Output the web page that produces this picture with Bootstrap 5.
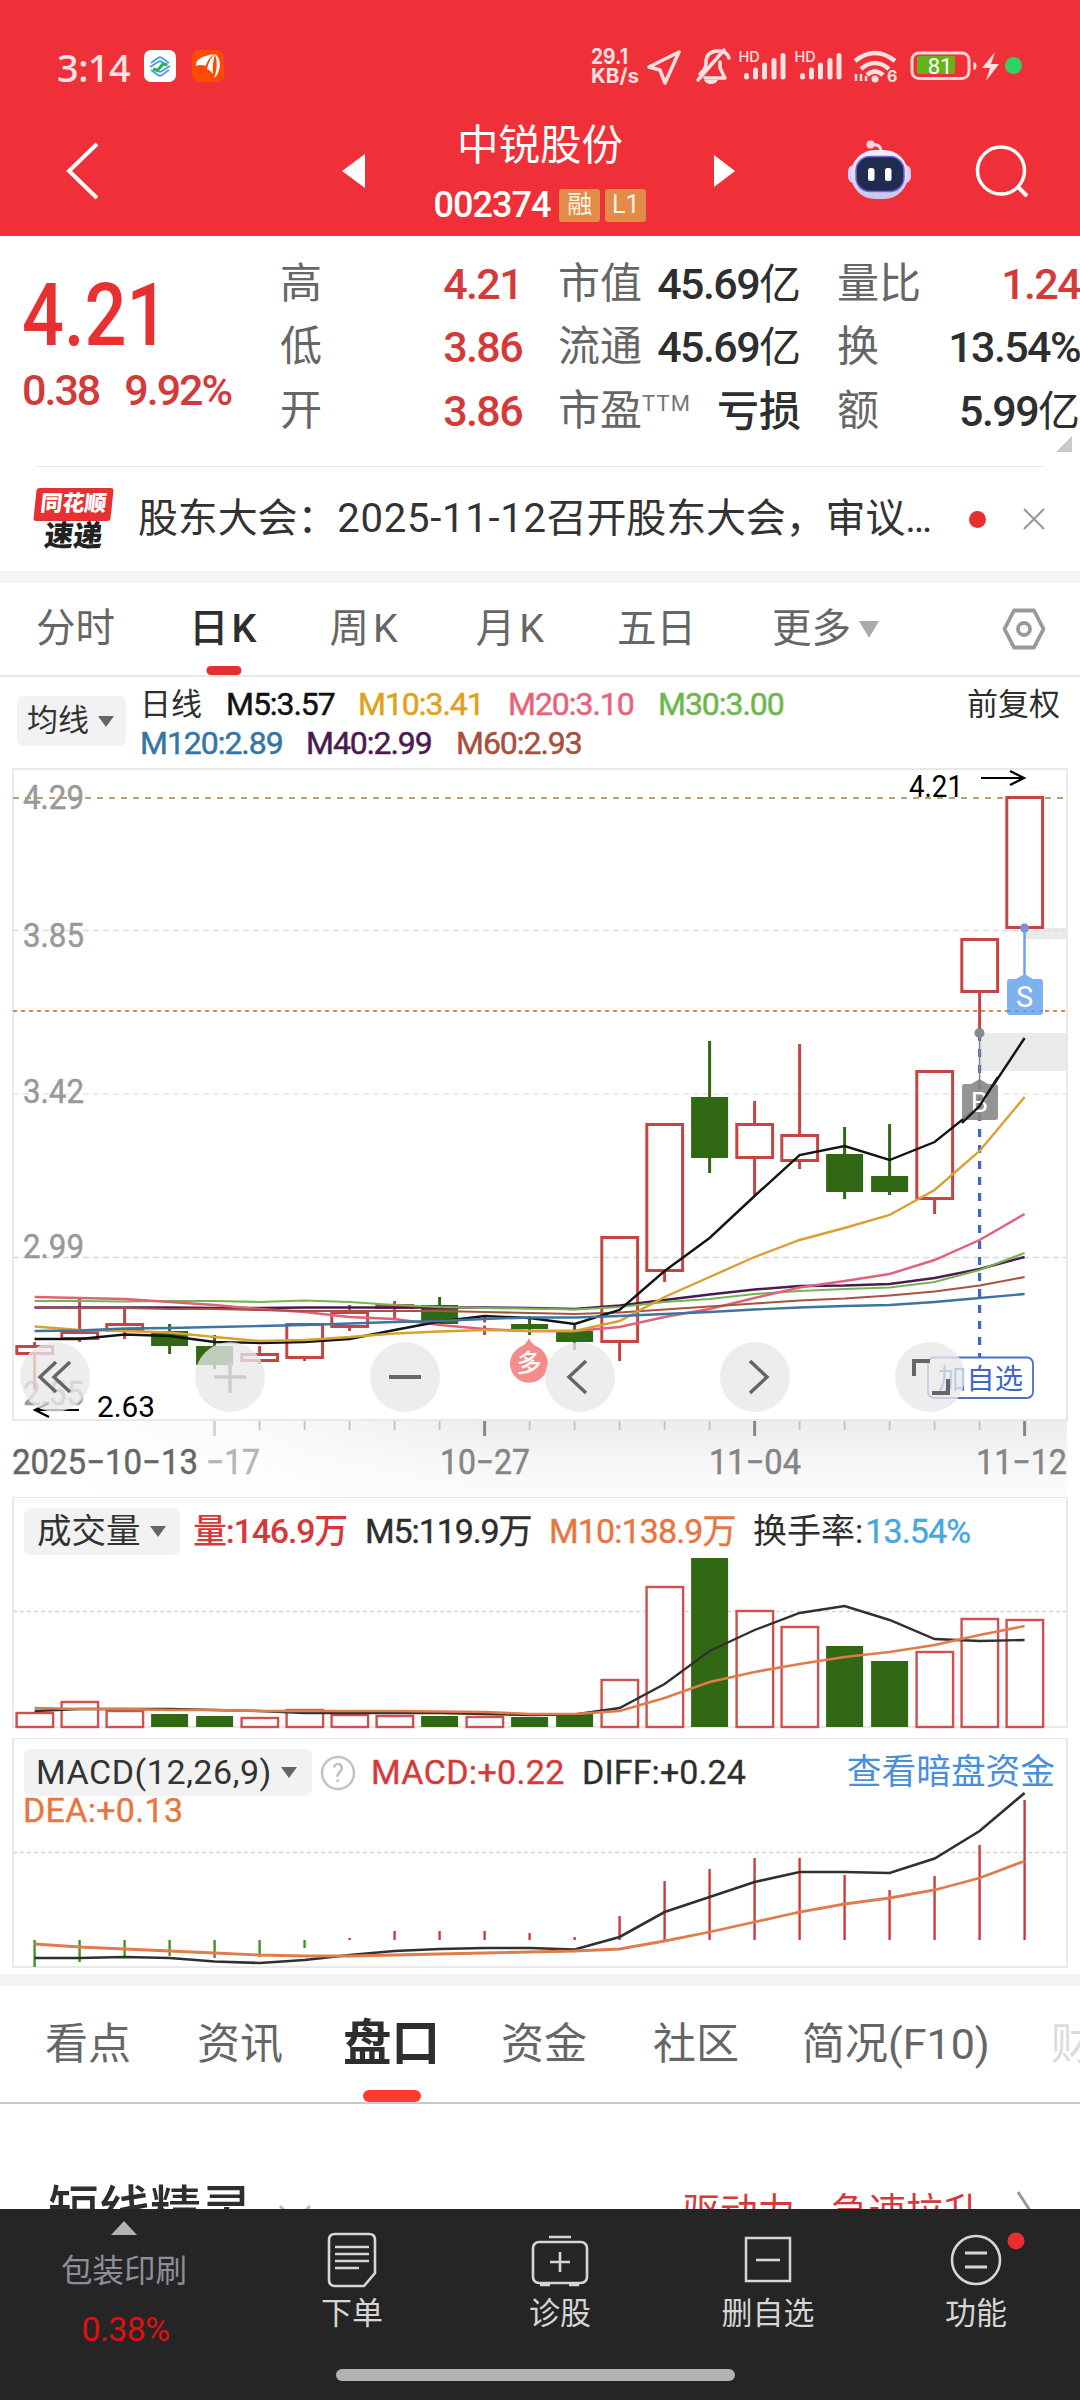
<!DOCTYPE html>
<html lang="zh-CN">
<head>
<meta charset="utf-8">
<meta name="viewport" content="width=1080">
<title>中锐股份 002374</title>
<link href="https://cdn.jsdelivr.net/npm/bootstrap@5.3.0/dist/css/bootstrap.min.css" rel="stylesheet">
<style>
body{width:1080px;height:2400px;overflow:hidden;background:#fff;color:#2e2e2e;font-family:Roboto,"Noto Sans CJK SC",sans-serif;font-size:40px;line-height:1.2}
svg{display:block;flex:none}
svg text{font-family:Roboto,"Noto Sans CJK SC",sans-serif}
svg .net text{font-family:Inter,sans-serif}
.top-red{background:#f03038;height:236px;color:#fff}
.status-row{height:106px;padding:40px 50px 0 57px}
.clock{font-size:38px;letter-spacing:-.6px;color:#ffe3e3;line-height:54px;width:86px;font-weight:500;font-family:"Noto Sans",sans-serif}
.title-row{height:130px;padding-left:64px}
.stock-title{width:348px;padding-top:15px}
.stock-name{font-size:41.5px;line-height:50px}
.stock-code{font-size:36px;letter-spacing:-1px;font-weight:500;line-height:36px;margin-top:16px}
.tagbox{background:#e38b49;color:#fff3e2;border-radius:3px;height:33px;line-height:32px;font-size:25px;width:41px;text-align:center;letter-spacing:0;font-weight:400}
.quote{height:230px}
.pricebox{width:281px;padding:28px 0 0 22px;color:#e63032}
.price-big{font-size:87px;font-weight:500;line-height:102px}
.price-big span{display:inline-block;transform:scaleX(.85);transform-origin:0 50%}
.price-sub{font-size:43px;letter-spacing:-2px;line-height:50px;color:#d53a3a;font-weight:500;margin-top:-1px}
.qcol{padding-top:15px}
.qrow{height:63.4px;line-height:66px}
.qlabel{color:#666;font-size:42px;white-space:nowrap}
.qval{font-size:43px;font-weight:500;letter-spacing:-1.6px;white-space:nowrap}
.qval i{font-style:normal;font-size:42px;font-weight:400;letter-spacing:0}
.qval i.loss{font-weight:500}
.up{color:#d53a3a}
.ttm{font-size:22px;color:#777;line-height:22px;letter-spacing:1.2px;vertical-align:14px}
.hairline{height:1px;background:#ececec;margin:0 35px}
.news{height:104px;padding:0 35px 0 35px}
.brand{width:78px;margin-right:25px;padding-top:2px}
.brand-a{background:#e63032;color:#fff;font-weight:900;font-size:22px;line-height:31px;height:33px;width:77px;text-align:center;transform:skewX(-6deg);border-radius:3px}
.brand-b{font-weight:900;font-size:29px;line-height:31px;transform:skewX(-6deg);text-align:center;width:77px;color:#222}
.newstext{font-size:40px;letter-spacing:-.15px;width:831px;white-space:nowrap;line-height:60px;color:#333}
.newstext span{letter-spacing:.75px}
.reddot{width:17px;height:17px;border-radius:50%;background:#e62e2e}
.band{height:12px;background:#f4f4f4}
.ktabs{height:94px;border-bottom:2px solid #e8e8e8;color:#666;font-size:39.5px;line-height:92px}
.ktabs .tabitem{position:relative;white-space:nowrap}
.ktabs .on{color:#2e2e2e;font-weight:500}
.tabitem .bar{position:absolute;left:50%;bottom:0;transform:translateX(-50%);width:35px;height:9px;border-radius:5px;background:#e62e2e}
.legend{height:91px;padding-left:17px}
.pill{background:#f2f2f2;border-radius:7px;color:#333}
.tri{width:0;height:0;border-left:8px solid transparent;border-right:8px solid transparent;border-top:11px solid #666}
.ma{font-size:32px;line-height:39px;letter-spacing:-1.05px;white-space:nowrap;font-weight:400;-webkit-text-stroke:.5px currentColor}
.ma span{display:inline-block}
.panel{position:relative}
.over{position:absolute;left:0;right:0}
.ind{font-size:34px;white-space:nowrap}
.ctl{width:70px;height:70px;border-radius:50%;background:rgba(232,232,232,.78)}
.ptabs{height:118px;border-bottom:2px solid #c9c9c9;font-size:43px;color:#666;line-height:116px}
.ptabs .tabitem{white-space:nowrap}
.ptabs .on{color:#2e2e2e;font-size:48.5px;font-weight:700}
.ptabs .bar{width:58px;height:12px;border-radius:6px;background:#fb3b30}
.peek{height:105px;overflow:hidden;padding:72px 46px 0 48px}
.dock{height:191px;background:#252525;color:#d6d6d6;position:relative}
.dockitem{width:208px;font-size:31px;line-height:38px}
</style>
</head>
<body>
<header class="top-red">
  <div class="status-row d-flex align-items-start">
    <div class="clock">3:14</div>
    <svg width="82" height="34" viewBox="0 0 82 34" style="margin-top:10px"><rect x="1" width="32" height="32" rx="7" fill="#fff"/><g fill="none" stroke="#4f9fdd" stroke-width="1.900" stroke-linejoin="round"><path d="M8 13l7-5q2-1.500 4 0l7 5"/><path d="M7 17l8-5q2-1.500 4 0l3 2"/><path d="M8 20l7 5q2 1.500 4 0l7-5"/><path d="M27 16l-8 5q-2 1.500-4 0l-3-2"/></g><path d="M10 19l4.500 1.500L20 14l4.500 1" fill="none" stroke="#26b35c" stroke-width="3"/><rect x="49" width="32" height="32" rx="7" fill="#ff4a05"/><path d="M54 11q4-5 17-7q-6 5-8.500 12q-5-2-9.500 0q0-3 1-5zM64 19q2-10 8-15q-3 10-2 20q-3-4-6-5zM71 28q5-12 1-24q8 6 3 19q-1 3-4 5z" fill="#fff"/></svg>
    <svg class="ms-auto" width="443" height="55" viewBox="587 40 443 55">
      <g class="net" fill="#ffe0e0" font-weight="700"><text x="591" y="64" font-size="21" textLength="37" lengthAdjust="spacingAndGlyphs">29.1</text><text x="591" y="82.500" font-size="20" textLength="48" lengthAdjust="spacingAndGlyphs">KB/s</text><text x="738.500" y="62" font-size="14.500" font-weight="500">HD</text><text x="794.500" y="62" font-size="14.500" font-weight="500">HD</text><text x="887" y="82" font-size="16">6</text></g>
      <g fill="none" stroke="#ffe0e0" stroke-width="3.500" stroke-linejoin="round" stroke-linecap="round"><path d="M649 67l30-15-14 31-5-13z"/><path d="M700 74q6-5 6-11 0-12 12-12 9 0 11 7M705 78h20l-5-10v-6M698 80l26-30"/></g>
      <path d="M704 80h14q-2 4-7 4t-7-4z" fill="#ffe0e0"/>
      <g stroke="#ffe0e0" stroke-width="5" stroke-linecap="round"><path d="M746.500 75.500v1.500M755.500 70v7M764.500 65v12M774 60.500v16.500M783 55.500v21.500M802.500 75.500v1.500M811.500 70v7M820.500 65v12M830 60.500v16.500M839 55.500v21.500"/></g>
      <g fill="none" stroke="#ffe0e0" stroke-width="4.500"><path d="M855 61q20-16 40 0M861 69q14-12 28 0M867 75q8-7 16 0"/><path d="M856 74v7M861 81v-7M866 76v5" stroke-width="2.500"/></g><circle cx="875" cy="79" r="3.500" fill="#ffe0e0"/>
      <rect x="912" y="53" width="57" height="25.500" rx="7" fill="none" stroke="#ffd5d5" stroke-width="3"/><rect x="917" y="56" width="38" height="18" rx="2" fill="#64b21c"/><path d="M973.500 62q3 0 3 4t-3 4z" fill="#ffd5d5"/><text x="940" y="74" font-size="22" fill="#fff" text-anchor="middle">81</text>
      <path d="M995 52l-13 16h8l-4 13 13-17h-8z" fill="#ffe0e0"/><circle cx="1013.500" cy="65.500" r="8.500" fill="#2fd265"/>
    </svg>
  </div>
  <div class="title-row d-flex align-items-center">
    <svg width="36" height="60" viewBox="64 141 36 60"><path d="M97 144L69 171l28 27" fill="none" stroke="#fff" stroke-width="4"/></svg>
    <svg width="24" height="36" viewBox="0 0 24 36" style="margin-left:242px"><path d="M0 18L23 1v34z" fill="#fff"/></svg>
    <div class="stock-title h-100 text-center">
      <div class="stock-name">中锐股份</div>
      <div class="stock-code d-flex justify-content-center align-items-center"><span>002374</span><span class="tagbox" style="margin-left:9px">融</span><span class="tagbox" style="margin-left:5px">L1</span></div>
    </div>
    <svg width="22" height="34" viewBox="0 0 22 34"><path d="M21 17L0 1v32z" fill="#fff"/></svg>
    <svg width="68" height="64" viewBox="846 140 68 64" style="margin-left:110px"><defs><linearGradient id="g1" x1="0" y1="0" x2="0" y2="1"><stop offset="0" stop-color="#fdf0fb"/><stop offset="1" stop-color="#c7c5f2"/></linearGradient></defs><path d="M871 146q10-2 10 7" fill="none" stroke="#ffd7e2" stroke-width="3"/><circle cx="870.500" cy="145.500" r="4" fill="#ffd7e2"/><rect x="848" y="166" width="63" height="18" rx="6" fill="#d3cbf1"/><rect x="851" y="151" width="57" height="49" rx="24" fill="url(#g1)"/><rect x="856" y="157.500" width="48" height="35" rx="14" fill="#202b50" stroke="#7166d8" stroke-width="1.500"/><rect x="868" y="169" width="6.500" height="13" rx="2.500" fill="#fff"/><rect x="885" y="169" width="6.500" height="13" rx="2.500" fill="#fff"/></svg>
    <svg width="58" height="60" viewBox="974 142 58 60" style="margin-left:60px"><circle cx="1001" cy="171.500" r="23.500" fill="none" stroke="#fff" stroke-width="3.500"/><path d="M1017 187l10 10" stroke="#fff" stroke-width="4"/></svg>
  </div>
</header>

<section class="quote d-flex">
  <div class="pricebox">
    <div class="price-big"><span>4.21</span></div>
    <div class="price-sub"><span>0.38</span><span style="margin-left:25px">9.92%</span></div>
  </div>
  <div class="qcol" style="width:242px;margin-left:-1px">
    <div class="qrow d-flex justify-content-between"><span class="qlabel">高</span><span class="qval up">4.21</span></div>
    <div class="qrow d-flex justify-content-between"><span class="qlabel">低</span><span class="qval up">3.86</span></div>
    <div class="qrow d-flex justify-content-between"><span class="qlabel">开</span><span class="qval up">3.86</span></div>
  </div>
  <div class="qcol" style="width:243px;margin-left:36px">
    <div class="qrow d-flex justify-content-between"><span class="qlabel">市值</span><span class="qval">45.69<i>亿</i></span></div>
    <div class="qrow d-flex justify-content-between"><span class="qlabel">流通</span><span class="qval">45.69<i>亿</i></span></div>
    <div class="qrow d-flex justify-content-between"><span class="qlabel">市盈<span class="ttm">TTM</span></span><span class="qval"><i class="loss">亏损</i></span></div>
  </div>
  <div class="qcol" style="width:243px;margin-left:36px">
    <div class="qrow d-flex justify-content-between"><span class="qlabel">量比</span><span class="qval up">1.24</span></div>
    <div class="qrow d-flex justify-content-between"><span class="qlabel">换</span><span class="qval">13.54%</span></div>
    <div class="qrow d-flex justify-content-between"><span class="qlabel">额</span><span class="qval">5.99<i>亿</i></span></div>
    <svg class="ms-auto me-2" width="16" height="16" viewBox="0 0 16 16" style="margin-top:-5px"><path d="M16 0v16H0z" fill="#c9c9c9"/></svg>
  </div>
</section>
<div class="hairline"></div>
<section class="news d-flex align-items-center">
  <div class="brand"><div class="brand-a">同花顺</div><div class="brand-b">速递</div></div>
  <div class="newstext">股东大会：<span>2025‑11‑12</span>召开股东大会，审议<span style="letter-spacing:0">…</span></div>
  <div class="reddot"></div>
  <svg class="ms-auto" width="22" height="22" viewBox="0 0 22 22"><path d="M1 1l20 20M21 1L1 21" stroke="#999" stroke-width="2.200"/></svg>
</section>
<div class="band"></div>

<nav class="ktabs d-flex">
  <div class="tabitem" style="margin-left:36px">分时</div>
  <div class="tabitem on" style="margin-left:74px;letter-spacing:3px">日K<span class="bar"></span></div>
  <div class="tabitem" style="margin-left:70px;letter-spacing:4px">周K</div>
  <div class="tabitem" style="margin-left:74px;letter-spacing:4px">月K</div>
  <div class="tabitem" style="margin-left:69px">五日</div>
  <div class="tabitem d-flex align-items-center" style="margin-left:76px">更多<svg width="20" height="17" viewBox="0 0 20 17" style="margin-left:8px"><path d="M0 0h20L10 17z" fill="#aaa"/></svg></div>
  <svg class="ms-auto align-self-center" width="44" height="42" viewBox="0 0 44 42" style="margin-right:34px"><path d="M12 2.500h20L41.500 21 32 39.500H12L2.500 21z" fill="none" stroke="#999" stroke-width="3.800" stroke-linejoin="round"/><circle cx="22" cy="21" r="6" fill="none" stroke="#999" stroke-width="3.800"/></svg>
</nav>

<section class="legend d-flex">
  <div class="pill d-flex align-items-center" style="width:109px;height:50px;margin-top:19px;padding-left:10px;font-size:31px">均线<span class="tri" style="margin-left:9px"></span></div>
  <div style="margin:8px 0 0 14px">
    <div class="ma d-flex"><span style="width:86px;font-size:31px;letter-spacing:0;-webkit-text-stroke:0">日线</span><span style="width:132px;color:#111">M5:3.57</span><span style="width:150px;color:#e0a020">M10:3.41</span><span style="width:150px;color:#e8637a">M20:3.10</span><span style="color:#6db84e">M30:3.00</span></div>
    <div class="ma d-flex"><span style="width:166px;color:#3576a5">M120:2.89</span><span style="width:150px;color:#4c1a52">M40:2.99</span><span style="color:#a85040">M60:2.93</span></div>
  </div>
  <div class="ms-auto" style="font-size:31px;line-height:40px;margin:8px 20px 0 0">前复权</div>
</section>

<section class="panel" style="height:729px">
  <svg id="kline" width="1080" height="729" viewBox="0 768 1080 729"></svg>
  <div class="over d-flex" style="top:574px;padding-left:20px;gap:105px">
    <div class="ctl"><svg width="70" height="70"><path d="M36 20L20 35l16 15M50 20L34 35l16 15" fill="none" stroke="#666" stroke-width="3.500"/></svg></div>
    <div class="ctl"><svg width="70" height="70"><path d="M19 35h32M35 19v32" stroke="#ccc" stroke-width="3.500"/></svg></div>
    <div class="ctl"><svg width="70" height="70"><path d="M19 35h32" stroke="#666" stroke-width="4"/></svg></div>
    <div class="ctl"><svg width="70" height="70"><path d="M41 19L24 35l17 16" fill="none" stroke="#666" stroke-width="3.500"/></svg></div>
    <div class="ctl"><svg width="70" height="70"><path d="M30 19l17 16-17 16" fill="none" stroke="#666" stroke-width="3.500"/></svg></div>
    <div class="ctl"><svg width="70" height="70"><path d="M19 34V19h16M53 37v14H37" fill="none" stroke="#666" stroke-width="4"/></svg></div>
  </div>
</section>

<section class="panel" style="height:241px">
  <svg id="vol" width="1080" height="241" viewBox="0 1497 1080 241"></svg>
  <div class="over d-flex align-items-center ind" style="top:11px;left:24px;height:47px;letter-spacing:-.9px">
    <div class="pill d-flex align-items-center h-100" style="width:156px;padding-left:13px;font-size:34.500px;letter-spacing:0;margin-right:13px">成交量<span class="tri" style="margin-left:9px"></span></div>
    <span class="up" style="width:172px;font-weight:500;letter-spacing:-1.2px">量:146.9万</span><span style="width:184px;letter-spacing:-1.1px;-webkit-text-stroke:.4px">M5:119.9万</span><span style="width:204px;color:#e9763f;-webkit-text-stroke:.4px">M10:138.9万</span><span style="letter-spacing:0">换手率:</span><span style="color:#47a8df;margin-left:2px;-webkit-text-stroke:.4px">13.54%</span>
  </div>
</section>

<section class="panel" style="height:236px">
  <svg id="macd" width="1080" height="236" viewBox="0 1738 1080 236"></svg>
  <div class="over d-flex align-items-center ind" style="top:11px;left:24px;right:25px;height:47px">
    <div class="pill d-flex align-items-center h-100" style="width:288px;padding-left:12px"><span style="width:238px;letter-spacing:.55px">MACD(12,26,9)</span><span class="tri" style="margin-left:7px"></span></div>
    <svg width="36" height="36" viewBox="0 0 36 36" style="margin:0 15px 0 8px"><circle cx="18" cy="18" r="16" fill="none" stroke="#c4c4c4" stroke-width="2.500"/><text x="18" y="27" font-size="25" fill="#bbb" text-anchor="middle">?</text></svg>
    <span class="up" style="width:211px;letter-spacing:.35px;-webkit-text-stroke:.4px">MACD:+0.22</span><span style="letter-spacing:.1px;-webkit-text-stroke:.3px">DIFF:+0.24</span><span class="ms-auto" style="color:#4a8fd9;font-size:34.700px">查看暗盘资金</span>
  </div>
  <div class="over ind" style="top:52px;left:23px;color:#e9763f;letter-spacing:.3px;-webkit-text-stroke:.4px">DEA:+0.13</div>
</section>
<div class="band"></div>

<nav class="ptabs d-flex overflow-hidden">
  <div class="tabitem" style="margin-left:45px">看点</div>
  <div class="tabitem" style="margin-left:66px">资讯</div>
  <div class="tabitem on position-relative" style="margin-left:60px">盘口<span class="bar"></span></div>
  <div class="tabitem" style="margin-left:61px">资金</div>
  <div class="tabitem" style="margin-left:66px">社区</div>
  <div class="tabitem" style="margin-left:63px">简况(F10)</div>
  <div class="tabitem" style="margin-left:61px;color:#dcdcdc">财务</div>
</nav>

<section class="peek d-flex align-items-start">
  <div style="font-size:51px;font-weight:500;line-height:70px">短线精灵</div>
  <svg width="34" height="22" viewBox="0 0 34 22" style="margin:28px 0 0 26px"><path d="M2 2l15 15L32 2" fill="none" stroke="#bbb" stroke-width="3"/></svg>
  <div class="ms-auto up" style="font-size:37.500px;line-height:60px;padding-top:6px">驱动力<span style="margin-left:36px">急速拉升</span></div>
  <svg width="18" height="44" viewBox="0 0 18 44" style="margin:14px 0 0 35px"><path d="M2 2l13 20L2 42" fill="none" stroke="#999" stroke-width="3"/></svg>
</section>

<footer class="dock d-flex">
  <div class="text-center" style="width:248px;padding-top:12px;color:#8e8e98;font-size:31.500px;line-height:38px">
    <svg class="mx-auto" width="26" height="14" viewBox="0 0 26 14"><path d="M13 0l13 14H0z" fill="#b3b3b3"/></svg>
    <div style="margin-top:18px">包装印刷</div>
    <div style="margin-top:19px;padding-left:3px;color:#e01010;font-size:34px;letter-spacing:-.6px">0.38%</div>
  </div>
  <div class="dockitem text-center"><svg class="mx-auto" width="64" height="86" viewBox="320 2209 64 86"><path d="M335 2234h34q6 0 6 6v33l-11 13h-29q-6 0-6-6v-40q0-6 6-6z" fill="none" stroke="#d6d6d6" stroke-width="2.600"/><path d="M335 2247h34M335 2254h34M335 2261h34M335 2268h24" stroke="#d6d6d6" stroke-width="2.600"/></svg>下单</div>
  <div class="dockitem text-center"><svg class="mx-auto" width="64" height="86" viewBox="528 2209 64 86"><rect x="533" y="2242" width="54" height="41" rx="6" fill="none" stroke="#d6d6d6" stroke-width="2.600"/><path d="M549 2237h22M540 2285h10M569 2285h10M550 2262h20M560 2252v20" stroke="#d6d6d6" stroke-width="2.600"/></svg>诊股</div>
  <div class="dockitem text-center"><svg class="mx-auto" width="64" height="86" viewBox="736 2209 64 86"><rect x="746" y="2238" width="44" height="43" fill="none" stroke="#d6d6d6" stroke-width="2.500"/><path d="M756 2260h24" stroke="#d6d6d6" stroke-width="2.600"/></svg>删自选</div>
  <div class="dockitem text-center"><svg class="mx-auto" width="100" height="86" viewBox="926 2209 100 86"><circle cx="976" cy="2260" r="24" fill="none" stroke="#d6d6d6" stroke-width="2.600"/><path d="M965 2253h22M965 2267h22" stroke="#d6d6d6" stroke-width="2.800"/><circle cx="1016" cy="2241" r="8.500" fill="#e62e2e"/></svg>功能</div>
  <div class="over d-flex justify-content-center" style="top:160px;right:9px"><div style="width:399px;height:12px;border-radius:6px;background:#b2b2b2"></div></div>
</footer>

<script src="https://cdn.jsdelivr.net/npm/bootstrap@5.3.0/dist/js/bootstrap.bundle.min.js"></script>
<script>
// shared x axis: 23 trading days, 45 px apart
const X = k => 34.6 + 45 * k;
const RED = '#c74444', GREEN = '#316813';
const line = (ys, c, w) => `<polyline points="${ys.map((y, k) => X(k).toFixed(1) + ',' + y).join(' ')}" fill="none" stroke="${c}" stroke-width="${w}"/>`;
const seg = (x1, y1, x2, y2, c, w, d) => `<line x1="${x1}" y1="${y1}" x2="${x2}" y2="${y2}" stroke="${c}" stroke-width="${w}"${d ? ` stroke-dasharray="${d}"` : ''}/>`;
const txt = (x, y, s, size, c, len, extra) => `<text x="${x}" y="${y}" font-size="${size}" fill="${c}" textLength="${len}" lengthAdjust="spacingAndGlyphs" ${extra || ''}>${s}</text>`;
const frame = (y1, y2) => `<rect x="13" y="${y1}" width="1054" height="${y2 - y1}" fill="none" stroke="#e9e9e9" stroke-width="2"/>`;
const semi = c => `stroke="${c}" stroke-width=".5"`;

// [up?, body top, body bottom, wick top, wick bottom]
const candles = [[1,1345,1355,1342,1390],[1,1331,1340,1299,1342],[1,1323,1332,1308,1339],[0,1331,1346,1324,1354],[0,1346,1365,1335,1369],[1,1353,1362,1346,1364],[1,1323,1359,1323,1361],[1,1311,1328,1305,1331],[1,1304,1309,1301,1318],[0,1305,1324,1297,1326],[1,1322.5,1325.5,1315,1335],[0,1324,1329,1316,1335],[0,1331,1342,1325,1350],[1,1236,1343,1236,1361],[1,1123,1272,1123,1282],[0,1097,1158,1041,1173],[1,1123,1159,1101,1195],[1,1134,1162,1044,1169],[0,1154,1192,1127,1199],[0,1176,1192,1124,1195],[1,1070,1200,1070,1214],[1,938,993,938,1033],[1,796,929,796,929]];
let s = `<defs><linearGradient id="ax" x1="0" y1="0" x2="0" y2="1"><stop offset="0" stop-color="#ececec"/><stop offset=".7" stop-color="#f9f9f9"/><stop offset="1" stop-color="#fbfbfb"/></linearGradient><linearGradient id="fade" x1="0" x2="1"><stop offset="0" stop-color="#fff"/><stop offset=".5" stop-color="#fff" stop-opacity=".75"/><stop offset="1" stop-color="#fff" stop-opacity="0"/></linearGradient></defs>`;
s += `<rect x="13" y="1420" width="1054" height="77" fill="url(#ax)"/><rect x="0" y="1420" width="500" height="77" fill="url(#fade)"/>`;
s += frame(769, 1420);
s += `<rect x="1025" y="928" width="42" height="11" fill="#eaeaea"/><rect x="980" y="1033" width="87" height="38" fill="#eaeaea"/>`;
s += seg(13,798,1064,798,'#b9a07a',2,'6 6') + seg(13,930.5,1066,930.5,'#dcdcdc',1.5,'6 4') + seg(13,1094,1066,1094,'#e8e8e8',1.5,'6 4') + seg(13,1257.5,1066,1257.5,'#d8d8d8',1.5,'6 4') + seg(13,1011,1066,1011,'#d98a4e',2,'4 4');
[[808.5,'4.29'],[947,'3.85'],[1103,'3.42'],[1258,'2.99'],[1405,'2.55']].forEach(([y, v]) => { s += txt(23, y, v, 34, '#999', 61, semi('#999')); });
s += seg(979.6,1033,979.6,1357,'#4167c4',3.2,'8 8');
candles.forEach(([up, t, b, wt, wb], k) => {
  const c = up ? RED : GREEN, x = X(k);
  if (wt < t) s += seg(x, wt, x, t, c, 3);
  if (wb > b) s += seg(x, b, x, wb, c, 3);
  s += up ? `<rect x="${x - 17.8}" y="${t + 1.5}" width="35.8" height="${b - t - 3}" fill="${k > 12 ? 'none' : '#fff'}" stroke="${c}" stroke-width="3"/>` : `<rect x="${x - 18.5}" y="${t}" width="37" height="${b - t}" fill="${c}"/>`;
});
s += line([1307.5,1307.5,1307.5,1307.5,1308,1308,1307.5,1307.5,1307.5,1307.5,1307.5,1308,1309,1305.5,1300,1294.5,1289.5,1286,1285.5,1284,1278,1269,1257],'#4b1a4f',2.4);
s += line([1301,1301,1301.5,1301,1301,1302,1300.5,1302,1305,1307,1308,1308.5,1309.5,1307,1302,1299,1294,1291,1289,1287.5,1282,1270,1253],'#76b352',2.2);
s += line([1297,1298,1299,1302,1305,1309,1312,1317,1319,1325,1329,1331,1331,1327,1317,1309,1298,1287.5,1281,1274,1260,1240,1214],'#e0617a',2.4);
s += line([1307,1308,1308,1309,1309,1310,1311,1311,1311,1311,1312,1313,1314,1312.5,1309.5,1306.5,1303.5,1300.5,1298.5,1295.5,1291.5,1285.5,1277],'#a65346',2.2);
s += line([1339,1339,1334.5,1336,1342,1343,1342,1339,1330,1321.5,1316,1318,1324,1310,1271,1238,1196,1155,1146,1160,1142,1106,1038],'#141414',2.4);
s += line([1326.5,1330,1331,1332.5,1337,1341,1340,1337,1333.5,1331.5,1330,1331,1331,1321,1297,1277,1257,1240,1228,1215,1190,1151,1097],'#d9a032',2.4);
s += line([1331,1330.5,1328.5,1328,1327,1326,1325,1323.5,1322,1321,1319,1317.5,1317.5,1316,1314,1312,1309.5,1307.5,1306,1305,1302,1298,1294],'#3d74a0',2.4);
// high and low marks
s += txt(909,797,'4.21',30.5,'#000',54) + `<path d="M981 778h43M1010 771l14 7-14 7" fill="none" stroke="#000" stroke-width="2.200"/>`;
s += txt(97,1417,'2.63',30,'#000',58) + `<path d="M79 1410H35M49 1403l-14 7 14 7" fill="none" stroke="#000" stroke-width="2.200"/>`;
// sell and buy flags
s += `<circle cx="1024.500" cy="928" r="4.500" fill="#7a8fd0"/>` + seg(1024.5,928,1024.5,976,'#6ea3e6',2.5) + `<path d="M1010 979h6l8.500-5 8.500 5h7q3 0 3 3v30q0 3-3 3h-30q-3 0-3-3v-30q0-3 3-3z" fill="#7eb1f0"/><text x="1024.500" y="1007" font-size="29" fill="#fff" text-anchor="middle">S</text>` + seg(1007,1011,1043,1011,'#6694cf',1.5,'4 4');
s += `<circle cx="979.500" cy="1033" r="5" fill="#888"/>` + seg(979.6,1033,979.6,1084,'#888',1.6) + `<path d="M965 1084h6l8.500-5 8.500 5h7q3 0 3 3v30q0 3-3 3h-30q-3 0-3-3v-30q0-3 3-3z" fill="#888" fill-opacity=".9"/><text x="979.600" y="1112" font-size="28" fill="#fff" text-anchor="middle">B</text>` + `<path d="M962 1123L979.600 1106 998 1077" fill="none" stroke="#141414" stroke-width="2.400"/>`;
s += `<rect x="928" y="1357.500" width="105" height="40.500" rx="6" fill="#fff" stroke="#4b70c4" stroke-width="1.800"/>` + txt(938,1388.5,'加自选',28.5,'#3f66c8',85);
s += `<path d="M529 1338q3 7 9 9a19 19 0 1 1-18 0q6-2 9-9z" fill="#f58c8c"/><text x="529" y="1372" font-size="25" fill="#fff" font-weight="500" text-anchor="middle">多</text>`;
// date axis
for (let k = 4; k < 23; k++) s += (k - 4) % 6 ? seg(X(k),1421,X(k),1430,'#c2c2c2',1.8) : seg(X(k),1421,X(k),1436,k == 4 ? '#d5d5d5' : '#888',3);
[[12,'2025−10−13','#666',186],[206,'−17','#b5b5b5',54],[440,'10−27','#858585',90],[709,'11−04','#858585',92],[976,'11−12','#858585',91]].forEach(([x, v, c, w]) => { s += txt(x, 1473.5, v, 35, c, w, semi(c)); });
document.getElementById('kline').innerHTML = s;

// volume
const green = new Set([3,4,9,11,12,15,18,19]);
const vols = [1712,1701,1710,1714,1716,1717,1709,1714,1715,1716,1716,1717,1714,1679,1586,1558,1610,1626,1646,1661,1651,1618,1619];
s = `<rect x="13" y="1497" width="1054" height="6" fill="#f9f9f9"/>` + frame(1497,1727) + seg(13,1611.5,1066,1611.5,'#d5d5d5',1.5,'4 3');
vols.forEach((t, k) => { s += green.has(k) ? `<rect x="${X(k) - 18.5}" y="${t}" width="37" height="${1727 - t}" fill="${GREEN}"/>` : `<rect x="${X(k) - 18}" y="${t + 1}" width="36.500" height="${1726 - t}" fill="#fff" stroke="#d04f4f" stroke-width="2.400"/>`; });
s += line([1711,1709,1709,1709,1710,1711,1713,1713,1713,1713,1714,1715,1714.5,1708,1684,1651,1630,1613,1606,1620,1639,1641,1640],'#303030',2.4);
s += line([1708,1709,1709,1710,1710,1711,1711,1711,1711,1711.5,1712,1714,1714,1711,1698,1682,1672,1664,1657,1652,1645,1635,1626],'#e07b4c',2.6);
document.getElementById('vol').innerHTML = s;

// MACD
const hist = [1967,1962,1957,1956,1958,1957,1948,1938,1931,1931,1931,1933,1937,1916,1881,1869,1858,1858,1875,1890,1876,1845,1800];
s = frame(1738,1967) + seg(13,1852.5,1066,1852.5,'#d5d5d5',1.5,'4 3');
hist.forEach((y, k) => { s += seg(X(k), 1940, X(k), y, y > 1940 ? '#3f9427' : '#cc3b3b', 2.4); });
s += line([1958,1958,1957,1958,1961.5,1963,1960,1955,1951,1949,1948,1948,1949.5,1937,1912,1897,1882,1872,1872,1873,1858.5,1831,1793],'#303030',2.6);
s += line([1944,1947,1949,1951,1953,1955,1956,1956,1955,1954,1953,1952,1951,1949,1941,1932,1922,1912,1904,1898,1890,1878,1861],'#e07b4c',2.8);
document.getElementById('macd').innerHTML = s;
</script>
</body>
</html>
